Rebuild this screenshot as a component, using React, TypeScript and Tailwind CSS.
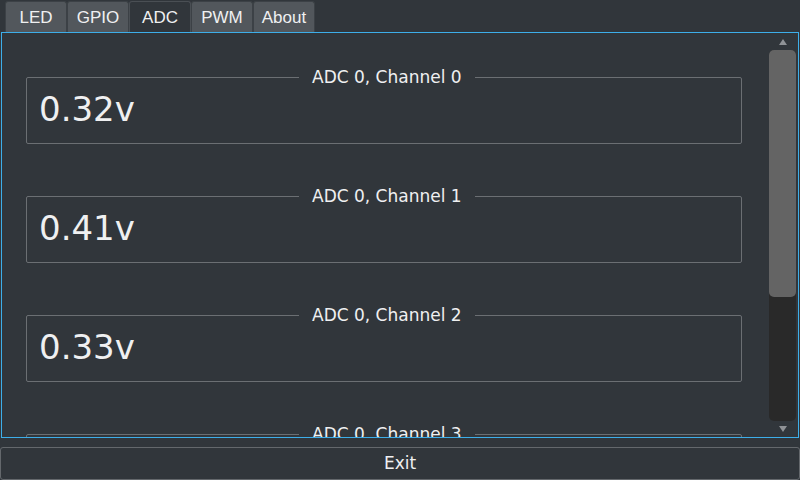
import React from 'react';

const TABS = ['LED', 'GPIO', 'ADC', 'PWM', 'About'];
const CHANNELS = [
  { label: 'ADC 0, Channel 0', value: '0.32v' },
  { label: 'ADC 0, Channel 1', value: '0.41v' },
  { label: 'ADC 0, Channel 2', value: '0.33v' },
  { label: 'ADC 0, Channel 3', value: '0.30v' },
];

const ChannelBox: React.FC<{ label: string; value: string }> = ({ label, value }) => (
  <fieldset className="w-[716px] border border-[#6b6f73] rounded-[2px] pl-[12px] pb-[14px]">
    <legend className="ml-[260px] px-[13px] text-[17px] leading-[20px] text-[#eff0f1]">{label}</legend>
    <div className="mt-[3px] text-[34px] leading-[39px] text-[#eff0f1]">{value}</div>
  </fieldset>
);

const App: React.FC = () => {
  return (
    <div className="w-[800px] h-[480px] bg-[#31363b] flex flex-col overflow-hidden font-['DejaVu_Sans',sans-serif]">
      {/* tab bar */}
      <div className="h-[32px] flex items-end pl-[5px] font-['Liberation_Sans',Arial,sans-serif]">
        {TABS.map(t => (
          <div
            key={t}
            className={
              t === 'ADC'
                ? 'w-[62px] h-[31px] flex items-center justify-center pt-[1px] text-[17px] text-[#eff0f1] bg-[#31363b] border border-b-0 border-[#4a4f54] rounded-t-[3px]'
                : 'w-[62px] h-[31px] flex items-center justify-center pt-[1px] text-[17px] text-[#eff0f1] bg-[#52575c] border border-b-0 border-[#3c4146] rounded-t-[3px]'
            }
          >
            {t}
          </div>
        ))}
      </div>

      {/* tab page */}
      <div className="h-[406px] mx-px border border-[#3daee9] flex overflow-hidden">
        <div className="flex-1 flex flex-col gap-[42px] pt-[34px] pl-[24px] overflow-hidden">
          {CHANNELS.map(c => (
            <ChannelBox key={c.label} label={c.label} value={c.value} />
          ))}
        </div>
        <div className="w-[27px] mr-[2px] flex flex-col items-center pt-[5px] pb-[4px]">
          <svg width="10" height="8" viewBox="0 0 10 8" className="mb-[4px]">
            <polygon points="5,1 9,7 1,7" fill="#8f9296" />
          </svg>
          <div className="w-[27px] flex-1 bg-[#292929] rounded-[5px] flex flex-col">
            <div className="h-[247px] bg-[#646464] rounded-[5px]" />
          </div>
          <svg width="10" height="8" viewBox="0 0 10 8" className="mt-[4px]">
            <polygon points="1,1 9,1 5,7" fill="#8f9296" />
          </svg>
        </div>
      </div>

      {/* exit */}
      <div className="mt-[9px] h-[33px] border border-[#64686c] rounded-[3px] flex items-center justify-center text-[17px] text-[#eff0f1]">
        Exit
      </div>
    </div>
  );
};

export default App;
